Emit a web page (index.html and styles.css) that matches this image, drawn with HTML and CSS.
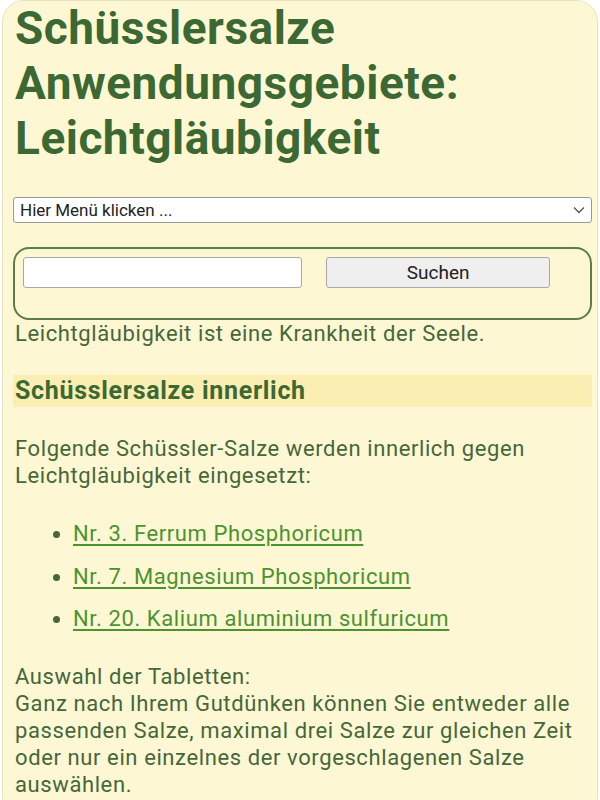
FILE: index.html
```html
<!DOCTYPE html>
<html lang="de">
<head>
<meta charset="utf-8">
<title>Schüsslersalze Anwendungsgebiete: Leichtgläubigkeit</title>
<link rel="stylesheet" href="styles.css">
</head>
<body>
<div class="page">
  <h1 class="title">Schüsslersalze Anwendungsgebiete: Leichtgläubigkeit</h1>
  <div class="menu">
    <span class="menu-label">Hier Menü klicken ...</span>
    <svg class="chev" width="12" height="8" viewBox="0 0 12 8"><path d="M1 1.5 L6 6.5 L11 1.5" fill="none" stroke="#555" stroke-width="1.3"/></svg>
  </div>
  <div class="search">
    <div class="search-input"></div>
    <div class="search-btn">Suchen</div>
  </div>
  <p class="text">Leichtgläubigkeit ist eine Krankheit der Seele.</p>
  <h2 class="sub">Schüsslersalze innerlich</h2>
  <p class="text">Folgende Schüssler-Salze werden innerlich gegen Leichtgläubigkeit eingesetzt:</p>
  <ul class="salts">
    <li><a href="#">Nr. 3. Ferrum Phosphoricum</a></li>
    <li><a href="#">Nr. 7. Magnesium Phosphoricum</a></li>
    <li><a href="#">Nr. 20. Kalium aluminium sulfuricum</a></li>
  </ul>
  <p class="text">Auswahl der Tabletten:<br>Ganz nach Ihrem Gutdünken können Sie entweder alle passenden Salze, maximal drei Salze zur gleichen Zeit oder nur ein einzelnes der vorgeschlagenen Salze auswählen.</p>
</div>
</body>
</html>
```

FILE: styles.css
```css
html, body {
  margin: 0;
  padding: 0;
  background: #ffffff;
}
body {
  font-family: Roboto, "Liberation Sans", sans-serif;
  width: 600px;
  height: 800px;
  overflow: hidden;
}
.page {
  box-sizing: border-box;
  margin: 0 2px;
  height: 820px;
  background: #fdf8d3;
  border: 1px solid #e6e2c6;
  border-radius: 22px;
  padding: 0 5px 0 10px;
  overflow: hidden;
}
.title {
  margin: 0;
  padding-top: 0;
  padding-left: 2px;
  font-size: 46px;
  line-height: 55px;
  font-weight: 700;
  color: #3c6834;
  letter-spacing: 0.5px;
}
.menu {
  margin-top: 31px;
  height: 26px;
  box-sizing: border-box;
  background: #fff;
  border: 1px solid #9a9a9a;
  border-radius: 3px;
  display: flex;
  align-items: center;
  justify-content: space-between;
  padding: 0 6px 0 6px;
}
.menu-label {
  font-size: 17px;
  color: #222;
}
.search {
  margin-top: 24px;
  height: 73px;
  box-sizing: border-box;
  border: 2px solid #5d7d45;
  border-radius: 16px;
  display: flex;
  align-items: flex-start;
  padding: 8px 40px 0 8px;
  gap: 24px;
}
.search-input {
  width: 282px;
  height: 31px;
  box-sizing: border-box;
  background: #fff;
  border: 1px solid #a8a8a8;
  border-radius: 3px;
}
.search-btn {
  width: 226px;
  height: 31px;
  box-sizing: border-box;
  background: #efefef;
  border: 1px solid #a8a8a8;
  border-radius: 3px;
  font-size: 19px;
  color: #222;
  display: flex;
  align-items: center;
  justify-content: center;
}
.text {
  margin: 0;
  padding-left: 2px;
  font-size: 22px;
  line-height: 27px;
  letter-spacing: 0.6px;
  color: #46673a;
}
.sub {
  margin: 28px 0 28px;
  padding-left: 2px;
  height: 32px;
  background: #fbeeb2;
  font-size: 25px;
  line-height: 32px;
  font-weight: 700;
  letter-spacing: 0.7px;
  color: #3c6834;
}
.salts {
  margin: 31px 0 31px;
  padding-left: 60px;
  list-style: disc;
  color: #46673a;
}
.salts li {
  font-size: 22px;
  line-height: 27px;
  letter-spacing: 0.6px;
  margin-bottom: 15.5px;
}
.salts li:last-child {
  margin-bottom: 0;
}
.salts a {
  color: #4c9330;
  text-decoration: underline;
  text-decoration-thickness: 2px;
  text-underline-offset: 3px;
}
```
